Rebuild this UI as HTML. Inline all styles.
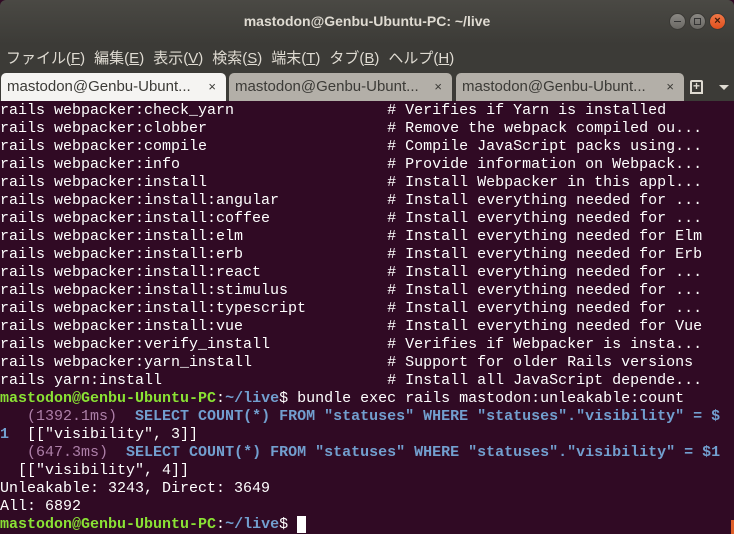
<!DOCTYPE html>
<html><head><meta charset="utf-8"><style>
*{margin:0;padding:0;box-sizing:border-box}
body{width:734px;height:534px;overflow:hidden;background:#300a24;font-family:"Liberation Sans","Noto Sans CJK JP",sans-serif}
#title{position:absolute;left:0;top:0;width:734px;height:44px;background:linear-gradient(#4a4944,#3c3b37);border-radius:6px 6px 0 0;color:#dfdbd2;font-weight:bold;font-size:14px;text-align:center;line-height:42px}
.btn{position:absolute;top:13px;width:17px;height:17px;border-radius:50%;background:linear-gradient(#8a8883,#6a6864);border:1px solid #3a3935}
#menu{position:absolute;left:0;top:44px;width:734px;height:29px;background:#3c3b37;color:#dfdbd2;font-size:15px;line-height:29px;padding-left:6px}
#menu span{margin-right:9px}
#tabs{position:absolute;left:0;top:73px;width:734px;height:28px;background:#3c3b37}
.tab{position:absolute;top:0;height:28px;border-radius:5px 5px 0 0;font-size:15px;line-height:28px;padding-left:6px;color:#3c3b37}
.tab b{position:absolute;right:10px;font-weight:normal;font-size:13px}
#term{position:absolute;left:0;top:102px;font-family:"Liberation Mono",monospace;font-size:15px;line-height:18px;color:#fff;white-space:pre}
.g{color:#8ae234;font-weight:bold}.bl{color:#729fcf;font-weight:bold}.p{color:#ad7fa8}.s{color:#729fcf;font-weight:bold}
</style></head><body>
<div id="title">mastodon@Genbu-Ubuntu-PC: ~/live
<div class="btn" style="left:669px"><div style="position:absolute;left:4px;top:7px;width:7px;height:1px;background:#333"></div></div>
<div class="btn" style="left:689px"><div style="position:absolute;left:4px;top:4px;width:7px;height:7px;border:1px solid #333"></div></div>
<div class="btn" style="left:709px;background:linear-gradient(#f07746,#e0501e);color:#3a1a0a;font-size:11px;line-height:15px">×</div>
</div>
<div id="menu"><span>ファイル(<u>F</u>)</span><span>編集(<u>E</u>)</span><span>表示(<u>V</u>)</span><span>検索(<u>S</u>)</span><span>端末(<u>T</u>)</span><span>タブ(<u>B</u>)</span><span>ヘルプ(<u>H</u>)</span></div>
<div id="tabs">
<div class="tab" style="left:1px;width:225px;background:#f5f4f2">mastodon@Genbu-Ubunt...<b>×</b></div>
<div class="tab" style="left:229px;width:223px;background:#b3afa8">mastodon@Genbu-Ubunt...<b>×</b></div>
<div class="tab" style="left:456px;width:228px;background:#b3afa8">mastodon@Genbu-Ubunt...<b>×</b></div>
<div style="position:absolute;left:690px;top:7px;width:13px;height:14px;border:2px solid #dfdbd2;border-radius:2px 2px 0 0;color:#dfdbd2;font-size:12px;line-height:9px;text-align:center;font-weight:bold">+</div>
<div style="position:absolute;left:719px;top:12px;border-left:5px solid transparent;border-right:5px solid transparent;border-top:5px solid #dfdbd2"></div>
</div>
<div id="term">rails webpacker:check_yarn                 # Verifies if Yarn is installed
rails webpacker:clobber                    # Remove the webpack compiled ou...
rails webpacker:compile                    # Compile JavaScript packs using...
rails webpacker:info                       # Provide information on Webpack...
rails webpacker:install                    # Install Webpacker in this appl...
rails webpacker:install:angular            # Install everything needed for ...
rails webpacker:install:coffee             # Install everything needed for ...
rails webpacker:install:elm                # Install everything needed for Elm
rails webpacker:install:erb                # Install everything needed for Erb
rails webpacker:install:react              # Install everything needed for ...
rails webpacker:install:stimulus           # Install everything needed for ...
rails webpacker:install:typescript         # Install everything needed for ...
rails webpacker:install:vue                # Install everything needed for Vue
rails webpacker:verify_install             # Verifies if Webpacker is insta...
rails webpacker:yarn_install               # Support for older Rails versions
rails yarn:install                         # Install all JavaScript depende...
<span class="g">mastodon@Genbu-Ubuntu-PC</span>:<span class="bl">~/live</span>$ bundle exec rails mastodon:unleakable:count
   <span class="p">(1392.1ms)</span>  <span class="s">SELECT COUNT(*) FROM "statuses" WHERE "statuses"."visibility" = $</span>
<span class="s">1</span>  [["visibility", 3]]
   <span class="p">(647.3ms)</span>  <span class="s">SELECT COUNT(*) FROM "statuses" WHERE "statuses"."visibility" = $1</span>
  [["visibility", 4]]
Unleakable: 3243, Direct: 3649
All: 6892
<span class="g">mastodon@Genbu-Ubuntu-PC</span>:<span class="bl">~/live</span>$ <span style="background:#fff"> </span></div>
<div style="position:absolute;left:731px;top:520px;width:3px;height:14px;background:#e0602a"></div>
</body></html>
